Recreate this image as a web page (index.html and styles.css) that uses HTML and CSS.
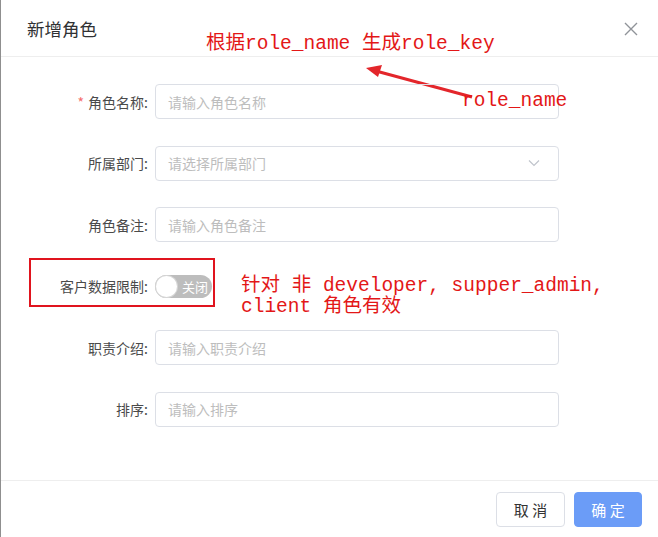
FILE: index.html
```html
<!DOCTYPE html>
<html lang="zh">
<head>
<meta charset="utf-8">
<title>新增角色</title>
<link rel="stylesheet" href="styles.css">
</head>
<body>
<div class="dialog">
  <div class="header">
    <span class="title">新增角色</span>
    <svg class="close" width="14" height="14" viewBox="0 0 14 14"><path d="M1 1L13 13M13 1L1 13" stroke="#909399" stroke-width="1.4" fill="none"/></svg>
    <div class="note note-top">根据role_name 生成role_key</div>
  </div>
  <div class="body">
    <svg class="arrow" width="120" height="40" viewBox="0 0 120 40"><path d="M109 36L13 10" stroke="#e3262b" stroke-width="3" fill="none"/><path d="M3 7L19 4L15 16Z" fill="#e3262b"/></svg>
    <form class="form">
      <div class="row">
        <label class="label"><span class="req">*</span>角色名称:</label>
        <div class="input"><span class="ph">请输入角色名称</span></div>
        <div class="note note-name">role_name</div>
      </div>
      <div class="row">
        <label class="label">所属部门:</label>
        <div class="input select"><span class="ph">请选择所属部门</span>
          <svg class="chev" width="12" height="8" viewBox="0 0 12 8"><path d="M1 1.5L6 6.5L11 1.5" stroke="#c0c4cc" stroke-width="1.2" fill="none"/></svg>
        </div>
      </div>
      <div class="row">
        <label class="label">角色备注:</label>
        <div class="input"><span class="ph">请输入角色备注</span></div>
      </div>
      <div class="row">
        <div class="redbox"></div>
        <label class="label">客户数据限制:</label>
        <div class="switch-wrap">
          <div class="switch"><span class="knob"></span><span class="sw-text">关闭</span></div>
        </div>
        <div class="note note-switch">针对 非 developer, supper_admin,<br>client 角色有效</div>
      </div>
      <div class="row">
        <label class="label">职责介绍:</label>
        <div class="input"><span class="ph">请输入职责介绍</span></div>
      </div>
      <div class="row">
        <label class="label">排序:</label>
        <div class="input"><span class="ph">请输入排序</span></div>
      </div>
    </form>
  </div>
  <div class="footer">
    <button class="btn">取 消</button>
    <button class="btn primary">确 定</button>
  </div>
</div>
</body>
</html>
```
FILE: styles.css
```css
* { box-sizing: border-box; }
html, body { margin: 0; padding: 0; background: #fff; }
body {
  width: 658px;
  height: 537px;
  overflow: hidden;
  font-family: "Noto Sans CJK SC", "Noto Sans", sans-serif;
  border-left: 1px solid #8f8f8f;
}
.dialog {
  display: flex;
  flex-direction: column;
  height: 537px;
}
.header {
  position: relative;
  height: 57px;
  border-bottom: 1px solid #eeeeee;
  display: flex;
  align-items: center;
  padding: 0 20px 0 26px;
  justify-content: space-between;
}
.title {
  font-size: 17.5px;
  color: #303133;
  margin-top: 1px;
}
.close { margin-top: 2px; }
.note {
  position: absolute;
  color: #e31717;
  font-family: "Liberation Mono", "Noto Sans CJK SC", monospace;
  font-size: 19.5px;
  line-height: 21px;
  white-space: nowrap;
}
.note-top { left: 205px; top: 34px; }
.body {
  position: relative;
  flex: 1;
  padding-top: 27px;
}
.arrow {
  position: absolute;
  left: 362px;
  top: 4px;
}
.form {
  display: flex;
  flex-direction: column;
  gap: 26.6px;
}
.row {
  position: relative;
  display: grid;
  grid-template-columns: 154px 404px;
  align-items: center;
  height: 35px;
}
.label {
  text-align: right;
  padding-right: 7px;
  font-size: 14px;
  color: #4a4a4a;
}
.req { color: #f56c6c; margin-right: 4px; }
.input {
  height: 35px;
  border: 1px solid #dcdfe6;
  border-radius: 4px;
  display: flex;
  align-items: center;
  padding: 0 12px;
  font-size: 14px;
}
.ph { color: #bdbdbd; }
.select { justify-content: space-between; }
.chev { margin-right: 6px; }
.switch-wrap { display: flex; align-items: center; }
.switch {
  position: relative;
  width: 57px;
  height: 23px;
  border-radius: 12px;
  background: #bdbdbd;
  display: flex;
  align-items: center;
  justify-content: flex-end;
  padding-right: 4px;
}
.knob {
  position: absolute;
  left: 1px;
  top: 1px;
  width: 21px;
  height: 21px;
  border-radius: 50%;
  background: #fff;
  box-shadow: 0 0 0 1px #d6d6d6;
}
.sw-text { color: #fff; font-size: 13px; }
.redbox {
  position: absolute;
  left: 28px;
  top: -11px;
  width: 186px;
  height: 49px;
  border: 2px solid #e0141e;
}
.note-switch { left: 240px; top: 7px; }
.note-name { left: 461px; top: 7px; }
.footer {
  height: 57px;
  border-top: 1px solid #eeeeee;
  display: flex;
  justify-content: flex-end;
  align-items: flex-start;
  gap: 9px;
  padding: 11px 16px 0 0;
}
.btn {
  height: 35px;
  width: 69px;
  border: 1px solid #dcdfe6;
  border-radius: 4px;
  background: #fff;
  color: #333;
  font-family: "Noto Sans CJK SC", sans-serif;
  font-size: 15px;
  padding: 0;
}
.btn.primary {
  background: #6b9cf7;
  border-color: #6b9cf7;
  color: #fff;
  width: 68px;
}
```
